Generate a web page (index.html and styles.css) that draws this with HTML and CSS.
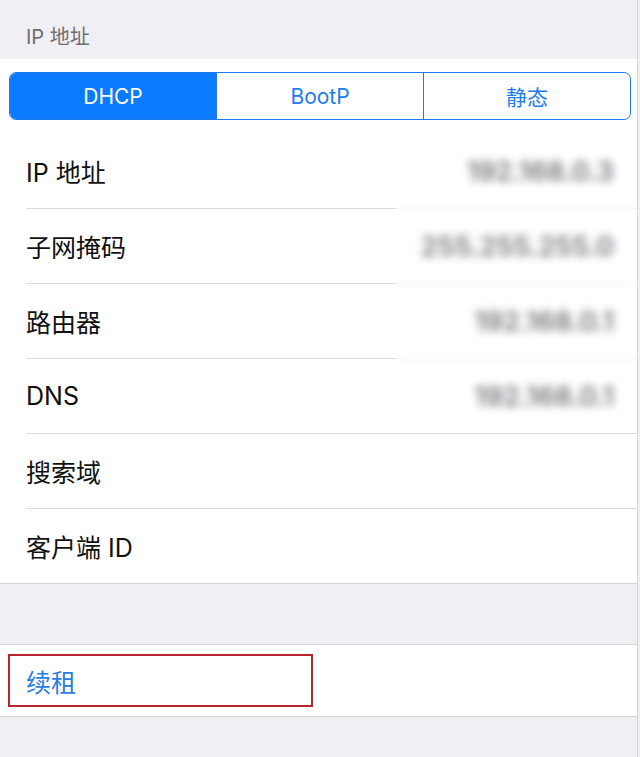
FILE: index.html
```html
<!DOCTYPE html>
<html lang="zh-CN">
<head>
    <meta charset="UTF-8">
    <meta name="viewport" content="width=device-width, initial-scale=1.0">
    <title>IP 地址</title>
    <link rel="stylesheet" href="styles.css">
</head>
<body>
    <div class="page">
        <div class="section-title">IP 地址</div>

        <div class="group">
            <div class="segment-wrap">
                <div class="segmented">
                    <div class="seg active">DHCP</div>
                    <div class="seg">BootP</div>
                    <div class="seg">静态</div>
                </div>
            </div>

            <div class="rows">
                <div class="row"><span class="label">IP 地址</span><span class="value">192.168.0.3</span></div>
                <div class="row"><span class="label">子网掩码</span><span class="value">255.255.255.0</span></div>
                <div class="row"><span class="label">路由器</span><span class="value">192.168.0.1</span></div>
                <div class="row"><span class="label">DNS</span><span class="value">192.168.0.1</span></div>
                <div class="row"><span class="label">搜索域</span><span class="value"></span></div>
                <div class="row last"><span class="label">客户端 ID</span><span class="value"></span></div>
                <!-- addresses are hidden behind a frosted patch -->
                <div class="redact"></div>
            </div>
        </div>

        <div class="spacer"></div>

        <div class="group action">
            <div class="renew">
                <span class="renew-text">续租</span>
            </div>
        </div>
    </div>
</body>
</html>
```

FILE: styles.css
```css
body {
    margin: 0;
    background: #efeff4;
    font-family: "Inter", "Noto Sans CJK SC", sans-serif;
}
.page {
    width: 637px;
    min-height: 757px;
    border-right: 1px solid #d6d6da;
}
.section-title {
    height: 59px;
    box-sizing: border-box;
    padding: 24px 0 0 26px;
    font-size: 20px;
    color: #6d6d72;
    line-height: 26px;
}
.group {
    background: #fff;
    border-bottom: 1px solid #d4d4d8;
}
.segment-wrap {
    padding: 13px 6px 14px 9px;
}
.segmented {
    display: flex;
    height: 48px;
    box-sizing: border-box;
    border: 1.5px solid #1b7cef;
    border-radius: 7px;
    overflow: hidden;
}
.seg {
    flex: 1;
    display: flex;
    align-items: center;
    justify-content: center;
    font-size: 21px;
    color: #1b7cef;
    border-left: 1.5px solid #1b7cef;
}
.seg:first-child {
    border-left: none;
}
.seg.active {
    background: #0a7bff;
    color: #fff;
}
.rows {
    position: relative;
}
.row {
    display: flex;
    align-items: center;
    justify-content: space-between;
    height: 75px;
    margin-left: 26px;
    padding-right: 23px;
    box-sizing: border-box;
    border-bottom: 1px solid #dcdce0;
}
.row.last {
    border-bottom: none;
    height: 74px;
}
.label {
    font-size: 25px;
    color: #111;
}
.value {
    font-size: 27px;
    font-weight: 600;
    color: #6a6a6e;
}
.redact {
    position: absolute;
    left: 396px;
    top: 0;
    width: 241px;
    height: 297px;
    backdrop-filter: blur(4px);
    background: rgba(255, 255, 255, 0.1);
}
.spacer {
    height: 60px;
    border-bottom: 1px solid #d4d4d8;
}
.action {
    height: 72px;
    padding: 9px 0 0 8px;
    box-sizing: border-box;
}
.renew {
    width: 305px;
    height: 53px;
    box-sizing: border-box;
    border: 2px solid #b8262b;
    display: flex;
    align-items: center;
    padding-left: 16px;
}
.renew-text {
    font-size: 25px;
    color: #2a7de1;
}
```
